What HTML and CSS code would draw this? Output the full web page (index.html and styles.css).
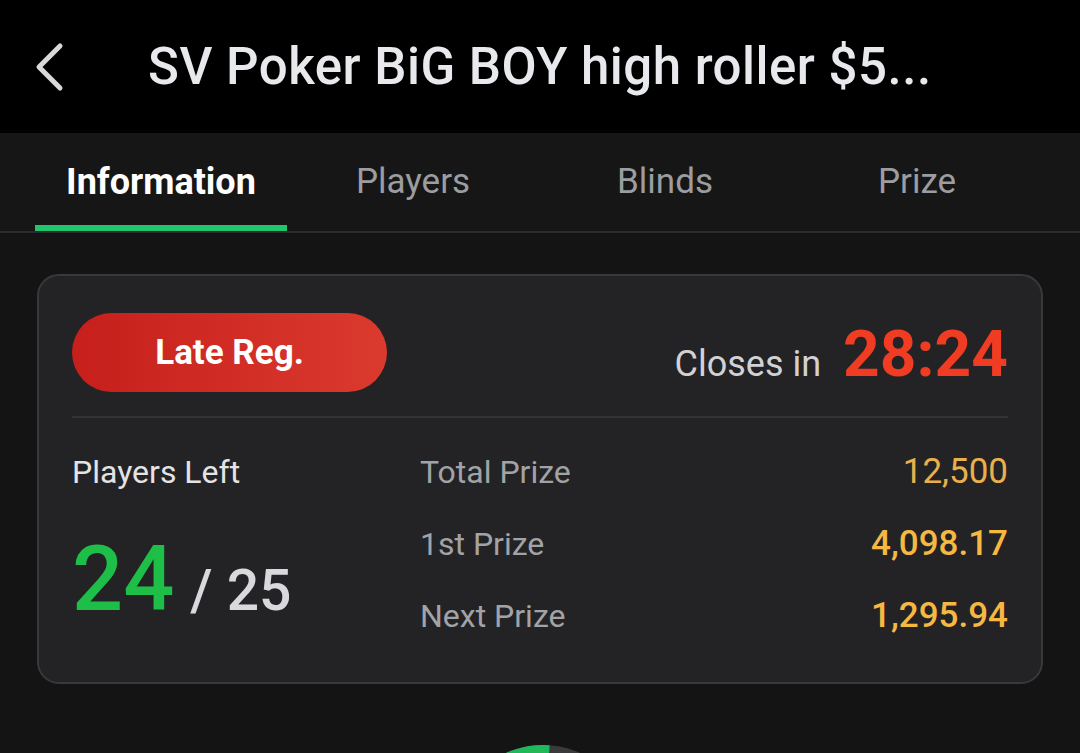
FILE: index.html
```html
<!DOCTYPE html>
<html lang="en">
<head>
    <meta charset="UTF-8">
    <meta name="viewport" content="width=device-width, initial-scale=1.0">
    <title>Tournament Information</title>
    <link rel="stylesheet" href="styles.css">
</head>
<body>
    <header class="top-bar">
        <button class="back-btn" aria-label="Back">
            <svg width="34" height="50" viewBox="0 0 34 50">
                <polyline points="25,4 4,25 25,46" fill="none" stroke="#d9d9dc" stroke-width="5" stroke-linecap="round" stroke-linejoin="round"/>
            </svg>
        </button>
        <h1 class="title">SV Poker BiG BOY high roller $5...</h1>
    </header>

    <nav class="tabs">
        <div class="tab active">Information</div>
        <div class="tab">Players</div>
        <div class="tab">Blinds</div>
        <div class="tab">Prize</div>
    </nav>

    <main class="content">
        <div class="info-card">
            <div class="card-top">
                <div class="late-reg">Late Reg.</div>
                <div class="closes">
                    <span class="closes-label">Closes in</span>
                    <span class="closes-time">28:24</span>
                </div>
            </div>
            <div class="card-bottom">
                <div class="players-left">
                    <div class="players-label">Players Left</div>
                    <div class="players-count">
                        <span class="count-now">24</span>
                        <span class="count-total">/ 25</span>
                    </div>
                </div>
                <div class="prize-list">
                    <div class="prize-row">
                        <span class="prize-label">Total Prize</span>
                        <span class="prize-value light">12,500</span>
                    </div>
                    <div class="prize-row">
                        <span class="prize-label">1st Prize</span>
                        <span class="prize-value">4,098.17</span>
                    </div>
                    <div class="prize-row">
                        <span class="prize-label">Next Prize</span>
                        <span class="prize-value">1,295.94</span>
                    </div>
                </div>
            </div>
        </div>

        <div class="chart">
            <svg width="180" height="180" viewBox="0 0 180 180">
                <circle cx="90" cy="90" r="78" fill="none" stroke="#3a3a3c" stroke-width="24"/>
                <circle cx="90" cy="90" r="78" fill="none" stroke="#20b85a" stroke-width="24"
                        stroke-dasharray="245 500" transform="rotate(-266 90 90)"/>
            </svg>
        </div>
    </main>
</body>
</html>
```

FILE: styles.css
```css
* {
    margin: 0;
    padding: 0;
    box-sizing: border-box;
    font-family: Roboto, 'Liberation Sans', sans-serif;
}
body {
    background: #141414;
    color: #e6e7eb;
    width: 1080px;
    height: 753px;
    overflow: hidden;
}
.top-bar {
    display: flex;
    align-items: center;
    height: 133px;
    background: #000;
    padding-left: 35px;
}
.back-btn {
    display: flex;
    background: none;
    border: none;
    width: 113px;
}
.title {
    font-size: 51px;
    font-weight: 500;
    letter-spacing: 0.5px;
    color: #e8e9ed;
    white-space: nowrap;
}
.tabs {
    display: grid;
    grid-template-columns: repeat(4, 252px);
    padding: 0 35px;
    background: #161616;
    border-bottom: 2px solid #2b2b2d;
}
.tab {
    height: 98px;
    line-height: 98px;
    text-align: center;
    font-size: 35px;
    color: #9b9da1;
}
.tab.active {
    color: #fff;
    font-size: 36px;
    font-weight: 700;
    box-shadow: inset 0 -6px 0 #22c46c;
}
.content {
    padding: 41px 37px 0;
}
.info-card {
    background: #232325;
    border: 2px solid #39393b;
    border-radius: 22px;
    padding: 37px 33px 30px;
}
.card-top {
    display: flex;
    justify-content: space-between;
    align-items: center;
    padding-bottom: 24px;
    border-bottom: 2px solid #333336;
}
.late-reg {
    width: 315px;
    height: 79px;
    line-height: 79px;
    border-radius: 40px;
    background: linear-gradient(90deg, #c61f1c, #db3a2e);
    color: #fff;
    font-size: 35px;
    font-weight: 700;
    text-align: center;
}
.closes {
    display: flex;
    align-items: baseline;
    gap: 22px;
    padding-top: 4px;
}
.closes-label {
    font-size: 36px;
    color: #d2d2d5;
}
.closes-time {
    font-size: 64px;
    font-weight: 700;
    color: #f03c22;
    line-height: 1;
}
.card-bottom {
    display: flex;
    padding-top: 18px;
}
.players-left {
    width: 348px;
}
.players-label {
    font-size: 32px;
    line-height: 72px;
    color: #e4e4e7;
}
.players-count {
    display: flex;
    align-items: baseline;
    height: 144px;
    line-height: 144px;
}
.count-now {
    font-size: 90px;
    font-weight: 500;
    color: #1ebf48;
    margin-right: 16px;
}
.count-total {
    font-size: 57px;
    font-weight: 500;
    color: #d9d9dd;
}
.prize-list {
    flex: 1;
}
.prize-row {
    display: flex;
    justify-content: space-between;
    align-items: baseline;
    line-height: 72px;
    font-size: 32px;
}
.prize-label {
    color: #a2a3a7;
}
.prize-value {
    font-size: 35px;
    color: #f5b841;
    font-weight: 500;
}
.prize-value.light {
    color: #e9b04c;
    font-weight: 400;
}
.chart {
    display: flex;
    justify-content: center;
    margin-top: 61px;
    padding-left: 6px;
}
```
